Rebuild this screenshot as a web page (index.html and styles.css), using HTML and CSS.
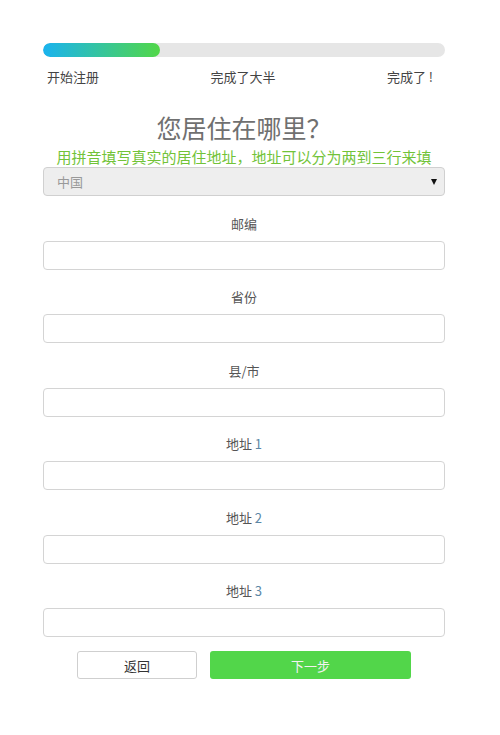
FILE: index.html
```html
<!DOCTYPE html>
<html>
<head>
    <meta charset="utf-8">
    <link rel="stylesheet" href="styles.css">
</head>
<body>
    <div class="container">
        <div class="progress"><div class="progress-fill" style="width: 29%"></div></div>
        <div class="steps">
            <span>开始注册</span>
            <span>完成了大半</span>
            <span>完成了 !</span>
        </div>

        <h1 class="title">您居住在哪里？</h1>
        <p class="hint">用拼音填写真实的居住地址，地址可以分为两到三行来填</p>

        <div class="select-wrap">
            <select class="select">
                <option>中国</option>
            </select>
        </div>

        <div class="field">
            <label>邮编</label>
            <input type="text">
        </div>
        <div class="field">
            <label>省份</label>
            <input type="text">
        </div>
        <div class="field">
            <label>县/市</label>
            <input type="text">
        </div>
        <div class="field">
            <label>地址 <span class="num">1</span></label>
            <input type="text">
        </div>
        <div class="field">
            <label>地址 <span class="num">2</span></label>
            <input type="text">
        </div>
        <div class="field">
            <label>地址 <span class="num">3</span></label>
            <input type="text">
        </div>

        <div class="actions">
            <button class="btn btn-back">返回</button>
            <button class="btn btn-next">下一步</button>
        </div>
    </div>
</body>
</html>
```

FILE: styles.css
```css
body {
    margin: 0;
    background: #fff;
    font-family: "Noto Sans CJK SC", "Noto Sans", sans-serif;
    color: #555;
}
.container {
    width: 402px;
    margin: 0 0 0 43px;
    padding-top: 43px;
}

/* progress */
.progress {
    height: 14px;
    border-radius: 7px;
    background: #e6e6e6;
    overflow: hidden;
}
.progress-fill {
    height: 100%;
    border-radius: 7px;
    background: linear-gradient(to right, #1ab3ef, #52d748);
}
.steps {
    display: flex;
    justify-content: space-between;
    margin-top: 10px;
    padding: 0 12px 0 4px;
    font-size: 13px;
    line-height: 20px;
    color: #444;
}

/* heading */
.title {
    margin: 28px 0 0;
    font-family: "Liberation Serif", "Noto Sans CJK SC", serif;
    font-weight: normal;
    font-size: 25px;
    line-height: 30px;
    text-align: center;
    color: #707070;
}
.hint {
    margin: 2px 0 0;
    font-size: 15px;
    line-height: 20px;
    text-align: center;
    color: #72c338;
}

/* select */
.select-wrap {
    position: relative;
}
.select-wrap::after {
    content: "";
    position: absolute;
    right: 8px;
    top: 12px;
    border-left: 3.5px solid transparent;
    border-right: 3.5px solid transparent;
    border-top: 6px solid #111;
}
.select {
    display: block;
    width: 100%;
    height: 29px;
    padding: 0 13px;
    box-sizing: border-box;
    border: 1px solid #d0d0d0;
    border-radius: 4px;
    background: #eee;
    font-family: inherit;
    font-size: 13px;
    color: #999;
    -webkit-appearance: none;
    appearance: none;
}

/* fields */
.field label {
    display: block;
    margin-top: 17.5px;
    margin-bottom: 7px;
    font-size: 13px;
    line-height: 20px;
    text-align: center;
    color: #555;
}
.field .num {
    color: #5b87a6;
}
.field input {
    display: block;
    width: 100%;
    height: 29px;
    box-sizing: border-box;
    border: 1px solid #d4d4d4;
    border-radius: 4px;
    background: #fff;
}

/* buttons */
.actions {
    display: flex;
    gap: 13px;
    margin-top: 14px;
    padding-left: 34px;
}
.btn {
    height: 28px;
    border-radius: 3px;
    font-family: inherit;
    font-size: 13px;
}
.btn-back {
    width: 120px;
    border: 1px solid #cfcfcf;
    background: #fff;
    color: #333;
}
.btn-next {
    width: 201px;
    border: none;
    background: #52d64a;
    color: #f2f2f2;
}
```
